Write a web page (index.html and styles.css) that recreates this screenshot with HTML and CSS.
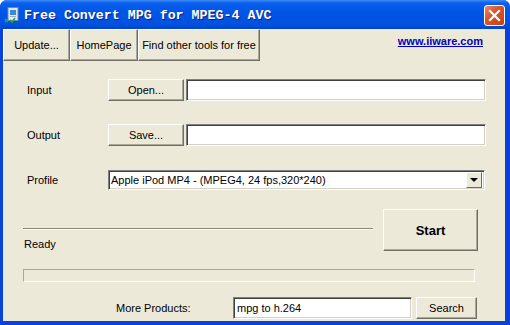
FILE: index.html
```html
<!DOCTYPE html>
<html lang="en">
<head>
    <meta charset="UTF-8">
    <title>Free Convert MPG for MPEG-4 AVC</title>
    <link rel="stylesheet" href="styles.css">
</head>
<body>
    <div class="window">
        <div class="titlebar">
            <svg class="app-icon" width="16" height="16" viewBox="0 0 16 16">
                <rect x="4" y="0.5" width="10" height="13" fill="#dfe8f4" stroke="#6d87b3"/>
                <rect x="6" y="3" width="6" height="5" fill="#3f86d8"/>
                <rect x="6" y="9" width="6" height="1" fill="#9bb0cf"/>
                <path d="M1 12 L4 15 M4 12 L1 15" stroke="#2fa82f" stroke-width="1.6"/>
                <path d="M6 13 L8 15 L11 11" stroke="#2fa82f" stroke-width="1.6" fill="none"/>
            </svg>
            <span class="title">Free Convert MPG for MPEG-4 AVC</span>
            <button class="close" type="button">
                <svg width="13" height="13" viewBox="0 0 13 13">
                    <path d="M2 2 L11 11 M11 2 L2 11" stroke="#fff" stroke-width="2.2" stroke-linecap="square"/>
                </svg>
            </button>
        </div>

        <div class="client">
            <!-- barre d'outils -->
            <div class="toolbar">
                <button class="btn tb-update" type="button">Update...</button>
                <button class="btn tb-home" type="button">HomePage</button>
                <button class="btn tb-find" type="button">Find other tools for free</button>
                <a class="site" href="#">www.iiware.com</a>
            </div>

            <div class="row row-input">
                <span class="label">Input</span>
                <button class="btn small" type="button">Open...</button>
                <div class="field wide"></div>
            </div>

            <div class="row row-output">
                <span class="label">Output</span>
                <button class="btn small" type="button">Save...</button>
                <div class="field wide"></div>
            </div>

            <div class="row row-profile">
                <span class="label">Profile</span>
                <div class="combo">
                    <span class="combo-text">Apple iPod MP4 - (MPEG4, 24 fps,320*240)</span>
                    <span class="combo-arrow"></span>
                </div>
            </div>

            <div class="status">
                <div class="status-left">
                    <div class="sep"></div>
                    <div class="ready">Ready</div>
                </div>
                <button class="btn start" type="button">Start</button>
            </div>

            <div class="progress"></div>

            <div class="row row-more">
                <span class="more-label">More Products:</span>
                <div class="field search-field">mpg to h.264</div>
                <button class="btn search" type="button">Search</button>
            </div>
        </div>
    </div>
</body>
</html>
```

FILE: styles.css
```css
/* Fenêtre style Windows XP */
body {
    margin: 0;
    padding: 0;
    font-family: "Liberation Sans", Arial, sans-serif;
    font-size: 11px;
    color: #000;
    background: #fff;
}

.window {
    width: 510px;
    height: 325px;
    box-sizing: border-box;
    display: flex;
    flex-direction: column;
    background: #0842d8;
    border-radius: 7px 7px 0 0;
    overflow: hidden;
}

.titlebar {
    height: 29px;
    flex: none;
    display: flex;
    align-items: center;
    padding-left: 4px;
    background: linear-gradient(#3d8cf6 0px, #0a5fee 3px, #0055e5 12px, #0052e0 24px, #0044cf 29px);
}

.app-icon {
    flex: none;
}

.title {
    margin-left: 4px;
    margin-top: 1px;
    font-family: "Liberation Mono", "Courier New", monospace;
    font-weight: bold;
    font-size: 13.3px;
    color: #fff;
    text-shadow: 1px 1px 0 #0a1e8c;
    white-space: pre;
}

.close {
    margin-left: auto;
    margin-right: 5px;
    margin-top: 1px;
    width: 21px;
    height: 21px;
    padding: 0;
    border: 1px solid #fff;
    border-radius: 3px;
    background: linear-gradient(135deg, #e98b6e 0%, #d9562c 40%, #c9400f 100%);
    display: flex;
    align-items: center;
    justify-content: center;
}

.client {
    flex: 1;
    margin: 0 5px 4px 3px;
    background: #ece9d8;
    display: flex;
    flex-direction: column;
}

/* Boutons en relief */
.btn {
    font-family: inherit;
    font-size: 11px;
    color: #000;
    background: #ece9d8;
    margin: 0;
    padding: 0;
    border: 1px solid;
    border-color: #fff #716f64 #716f64 #fff;
    box-shadow: inset -1px -1px 0 #aca899;
    box-sizing: border-box;
}

.toolbar {
    display: flex;
    height: 32px;
    flex: none;
}

.tb-update { width: 67px; }
.tb-home { width: 68px; }
.tb-find { width: 122px; }

.site {
    margin-left: auto;
    margin-right: 22px;
    margin-top: 6px;
    font-weight: bold;
    color: #0000c8;
    text-decoration: underline;
}

.row {
    display: flex;
    align-items: center;
    flex: none;
}

.row-input { margin-top: 18px; height: 22px; }
.row-output { margin-top: 23px; height: 22px; }
.row-profile { margin-top: 24px; height: 20px; }

.label {
    width: 81px;
    padding-left: 24px;
}

.btn.small {
    width: 76px;
    height: 22px;
    margin-right: 2px;
}

.field {
    height: 22px;
    box-sizing: border-box;
    background: #fff;
    border: 1px solid;
    border-color: #7f7f7f #fff #fff #7f7f7f;
    box-shadow: inset 1px 1px 0 #404040, inset -1px -1px 0 #d4d0c8;
}

.wide { width: 300px; }

.combo {
    width: 377px;
    height: 20px;
    box-sizing: border-box;
    background: #fff;
    border: 1px solid;
    border-color: #7f7f7f #fff #fff #7f7f7f;
    box-shadow: inset 1px 1px 0 #404040, inset -1px -1px 0 #d4d0c8;
    display: flex;
    align-items: center;
    padding: 0 2px 0 2px;
}

.combo-text {
    flex: 1;
    white-space: nowrap;
}

.combo-arrow {
    width: 16px;
    height: 16px;
    box-sizing: border-box;
    background: #ece9d8;
    border: 1px solid;
    border-color: #fff #716f64 #716f64 #fff;
    position: relative;
}

.combo-arrow::after {
    content: "";
    position: absolute;
    left: 3px;
    top: 5px;
    border-left: 4px solid transparent;
    border-right: 4px solid transparent;
    border-top: 4px solid #000;
}

.status {
    display: flex;
    margin-top: 19px;
    flex: none;
}

.status-left {
    width: 350px;
    margin-left: 20px;
}

.sep {
    margin-top: 19px;
    height: 1px;
    background: #8a887c;
    border-bottom: 1px solid #fff;
}

.ready {
    margin-top: 8px;
    padding-left: 1px;
}

.btn.start {
    width: 95px;
    height: 42px;
    margin-left: 10px;
    font-weight: bold;
    font-size: 13px;
}

.progress {
    margin-top: 18px;
    margin-left: 20px;
    width: 452px;
    height: 13px;
    box-sizing: border-box;
    border: 1px solid;
    border-color: #aca899 #fff #fff #aca899;
    flex: none;
}

.row-more {
    margin-top: 15px;
    height: 22px;
}

.more-label {
    width: 117px;
    padding-left: 113px;
}

.search-field {
    width: 179px;
    padding: 4px 0 0 3px;
}

.btn.search {
    width: 61px;
    height: 22px;
    margin-left: 4px;
}
```
